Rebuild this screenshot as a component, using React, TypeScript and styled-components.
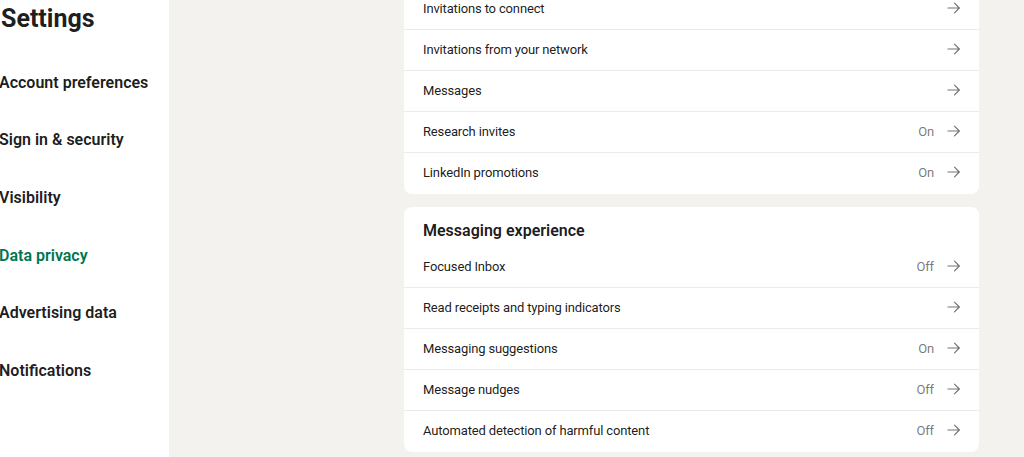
import styled, { createGlobalStyle } from 'styled-components'
import * as React from 'react'

type Setting = { label: string; status?: string }

const notificationRows: Setting[] = [
  { label: 'Invitations to connect' },
  { label: 'Invitations from your network' },
  { label: 'Messages' },
  { label: 'Research invites', status: 'On' },
  { label: 'LinkedIn promotions', status: 'On' },
]

const messagingRows: Setting[] = [
  { label: 'Focused Inbox', status: 'Off' },
  { label: 'Read receipts and typing indicators' },
  { label: 'Messaging suggestions', status: 'On' },
  { label: 'Message nudges', status: 'Off' },
  { label: 'Automated detection of harmful content', status: 'Off' },
]

const navItems = [
  'Account preferences',
  'Sign in & security',
  'Visibility',
  'Data privacy',
  'Advertising data',
  'Notifications',
]

function Arrow() {
  return (
    <ArrowIcon viewBox="0 0 14 14" width="14" height="14" aria-hidden>
      <path d="M1 7h11.5M7.5 2.2 12.3 7l-4.8 4.8" fill="none" stroke="currentColor" strokeWidth="1.2" strokeLinecap="round" strokeLinejoin="round" />
    </ArrowIcon>
  )
}

function SettingRow({ label, status }: Setting) {
  return (
    <Row>
      <RowLabel>{label}</RowLabel>
      {status && <Status>{status}</Status>}
      <Arrow />
    </Row>
  )
}

function App() {
  return (
    <>
      <GlobalStyles />
      <Page>
        <Sidebar>
          <Title>Settings</Title>
          <Nav>
            {navItems.map((item) => (
              <NavItem key={item} $active={item === 'Data privacy'}>
                {item}
              </NavItem>
            ))}
          </Nav>
        </Sidebar>

        <Main>
          <ScrolledCard>
            {notificationRows.map((r) => (
              <SettingRow key={r.label} {...r} />
            ))}
          </ScrolledCard>

          <Card>
            <CardHeading>Messaging experience</CardHeading>
            {messagingRows.map((r) => (
              <SettingRow key={r.label} {...r} />
            ))}
          </Card>
        </Main>
      </Page>
    </>
  )
}

const GlobalStyles = createGlobalStyle`
  html, body {
    margin: 0;
    padding: 0;
    height: 100%;
    overflow: hidden;
  }
  body {
    font-family: Roboto, "Liberation Sans", sans-serif;
    background: #f4f2ee;
    color: rgba(0, 0, 0, 0.9);
    -webkit-font-smoothing: antialiased;
  }
`

const Page = styled.div`
  display: flex;
  height: 457px;
  overflow: hidden;
`

const Sidebar = styled.aside`
  width: 169px;
  flex-shrink: 0;
  background: #ffffff;
  overflow: hidden;
`

const Title = styled.h1`
  margin: 0 0 0 1px;
  font-size: 25px;
  line-height: 37px;
  font-weight: 700;
  color: rgba(0, 0, 0, 0.9);
`

const Nav = styled.nav`
  display: flex;
  flex-direction: column;
  margin: 17px 0 0 -1px;
`

const NavItem = styled.a<{ $active?: boolean }>`
  display: block;
  padding: 16.8px 0;
  font-size: 16px;
  line-height: 24px;
  font-weight: 600;
  white-space: nowrap;
  color: ${(p) => (p.$active ? '#01754f' : 'rgba(0, 0, 0, 0.9)')};
`

const Main = styled.main`
  flex: 1;
  display: flex;
  flex-direction: column;
  gap: 13px;
  padding: 0 45px 0 235px;
`

const Card = styled.section`
  background: #ffffff;
  border-radius: 8px;
  overflow: hidden;
  padding-bottom: 1px;
`

// the notifications card is partly scrolled out of view
const ScrolledCard = styled(Card)`
  margin-top: -11px;
  border-radius: 0 0 8px 8px;
`

const CardHeading = styled.h2`
  margin: 0;
  padding: 13px 19px 5px;
  font-size: 16px;
  line-height: 22px;
  font-weight: 600;
`

// 38px + 2px bottom padding keeps the label a hair above centre
const Row = styled.div`
  display: flex;
  align-items: center;
  height: 38px;
  padding: 0 18px 2px 19px;
  font-size: 13px;
  letter-spacing: -0.15px;

  & + & {
    border-top: 1px solid #ebebeb;
  }
`

const RowLabel = styled.span`
  flex: 1;
  color: rgba(0, 0, 0, 0.9);
`

const Status = styled.span`
  color: rgba(0, 0, 0, 0.55);
  margin-right: 13px;
`

const ArrowIcon = styled.svg`
  color: rgba(0, 0, 0, 0.55);
  flex-shrink: 0;
`

export default React.memo(App)
